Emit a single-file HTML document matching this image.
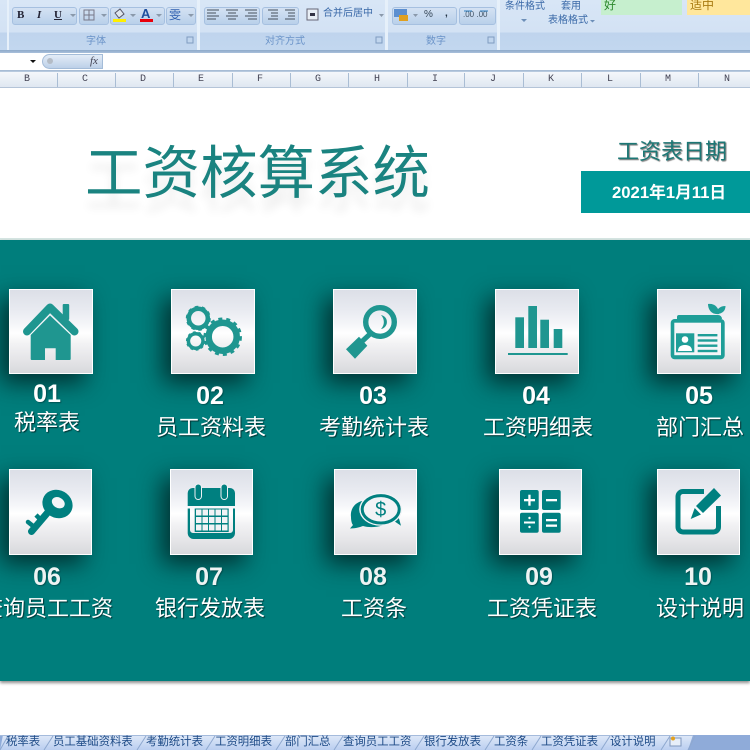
<!DOCTYPE html>
<html lang="zh"><head><meta charset="utf-8"><title>工资核算系统</title>
<style>
html,body{margin:0;padding:0;background:#fff}
#p{position:relative;width:750px;height:750px;overflow:hidden;background:#fff;font-family:"Liberation Sans","Noto Sans CJK SC",sans-serif}
#p div{position:absolute;white-space:nowrap}
.rb{background:linear-gradient(#d4e2f3,#b9d0ea);border:1px solid #a6c0e0;border-radius:3px;height:16px;top:7px;box-sizing:content-box}
.gl{top:35px;height:14px;font-size:10px;line-height:14px;color:#6a93c8}
.rt{font-size:10px;line-height:12px;color:#3a69a8}
.col{top:73px;height:14px;font:10px/14px "Liberation Mono",monospace;color:#445;text-align:center;width:20px}
.sep{top:73px;width:1px;height:14px;background:#a9bdd4}
.tile{box-sizing:border-box;border:1px solid #fff;background:linear-gradient(#dcdfe7 0%,#e9ebf1 25%,#f5f6f9 42%,#fff 52%,#f2f2f4 65%,#e2e2e5 88%,#d8d9dc 100%);box-shadow:-8px 9px 22px rgba(0,30,30,.8)}
.n{width:100px;text-align:center;font-weight:bold;font-size:25px;line-height:28px;color:#fff;text-shadow:1px 1px 1px rgba(0,60,60,.6)}
.l{width:200px;text-align:center;font-size:22px;line-height:28px;color:#fff;text-shadow:1px 1px 1px rgba(0,40,40,.85)}
.t{top:735px;font-size:11.4px;line-height:15px;color:#1d4a86}
</style></head><body><div id="p">

<!-- ribbon -->
<div style="left:0;top:0;width:750px;height:50px;background:linear-gradient(#d8e6f6 0,#d3e2f4 32px,#bfd4ed 33px,#c2d7ef 49px)"></div>
<div style="left:7px;top:0;width:2px;height:50px;background:#e6f0fa"></div>
<div style="left:197px;top:0;width:3px;height:50px;background:#e6f0fa"></div>
<div style="left:385px;top:0;width:3px;height:50px;background:#e6f0fa"></div>
<div style="left:497px;top:0;width:3px;height:50px;background:#e6f0fa"></div>
<div style="left:0;top:50px;width:750px;height:3px;background:linear-gradient(#8ea9c9,#a8c0db)"></div>

<div class="rb" style="left:12px;width:63px"></div>
<div class="rb" style="left:79px;width:28px"></div>
<div class="rb" style="left:110px;width:53px"></div>
<div class="rb" style="left:166px;width:28px"></div>
<div class="rb" style="left:204px;width:54px"></div>
<div class="rb" style="left:262px;width:35px"></div>
<div class="rb" style="left:392px;width:63px"></div>
<div class="rb" style="left:459px;width:35px"></div>

<div style="left:17px;top:8px;font:bold 11px/14px 'Liberation Serif',serif;color:#223">B</div>
<div style="left:37px;top:8px;font:italic bold 11px/14px 'Liberation Serif',serif;color:#223">I</div>
<div style="left:54px;top:8px;font:bold 11px/14px 'Liberation Serif',serif;color:#223;text-decoration:underline">U</div>
<div style="left:141px;top:7px;font:bold 13px/14px 'Liberation Sans',sans-serif;color:#1f4f9e">A</div>
<div style="left:113px;top:19px;width:13px;height:3px;background:#ffef00"></div>
<div style="left:140px;top:19px;width:13px;height:3px;background:#e8000c"></div>
<div style="left:169px;top:7px;font-size:12px;line-height:16px;color:#2f5fb0">雯</div>
<div style="left:424px;top:9px;font-size:10px;line-height:12px;color:#345">%</div>
<div style="left:445px;top:8px;font:bold 10px/12px 'Liberation Sans',sans-serif;color:#234">,</div>
<div class="rt" style="left:463px;top:9px;font-size:8px;color:#456">.00 .00</div>

<svg style="position:absolute;left:0;top:0" width="750" height="50">
<g fill="#8a99ab"><path d="M70 14h6l-3 3zM101 14h6l-3 3zM130 14h6l-3 3zM156 14h6l-3 3zM188 14h6l-3 3zM379 14h5l-2.500 3zM413 14h5l-2.500 3z"/></g>
<g stroke="#778" fill="none"><rect x="84" y="10" width="10" height="10"/><path d="M89 10v10M84 15h10"/></g>
<path d="M115 13l5-4 4 5-5 4z" fill="#dfe6ee" stroke="#556"/>
<g stroke="#46505c" stroke-width="1"><path d="M207 10h12M207 13h9M207 16h12M207 19h9M226 10h12M228 13h8M226 16h12M228 19h8M245 10h12M248 13h9M245 16h12M248 19h9M268 10h10M271 13h7M271 16h7M268 19h10M285 10h10M288 13h7M288 16h7M285 19h10"/></g>
<rect x="307" y="9" width="11" height="11" fill="#e8eef5" stroke="#667"/><rect x="310" y="13" width="5" height="3" fill="#334"/>
<rect x="394" y="9" width="13" height="8" fill="#5c8fd0"/><rect x="399" y="15" width="9" height="6" fill="#e0a020"/>
<path d="M464 11h8M480 11h8" stroke="#2f7fc0"/>
<path d="M521 19h6l-3 3zM590 20h5l-2.500 2.500z" fill="#6d8fb8"/>
<g fill="none" stroke="#7f9cc0"><path d="M187 37h6v6h-6zM376 37h6v6h-6zM488 37h6v6h-6z"/></g>
</svg>

<div class="rt" style="left:323px;top:8px">合并后居中</div>
<div class="rt" style="left:505px;top:1px">条件格式</div>
<div class="rt" style="left:561px;top:1px">套用</div>
<div class="rt" style="left:548px;top:15px">表格格式</div>
<div style="left:601px;top:0;width:81px;height:15px;background:#c6efce;font-size:12px;line-height:11px;color:#2f8a2f;text-indent:3px">好</div>
<div style="left:687px;top:0;width:63px;height:15px;background:#ffe79c;font-size:12px;line-height:11px;color:#a87a10;text-indent:3px">适中</div>
<div class="gl" style="left:86px">字体</div>
<div class="gl" style="left:265px">对齐方式</div>
<div class="gl" style="left:426px">数字</div>

<!-- formula bar -->
<div style="left:0;top:53px;width:750px;height:17px;background:#fff"></div>
<div style="left:42px;top:54px;width:61px;height:15px;border-radius:8px 0 0 8px;background:linear-gradient(#e3ecf7,#bcd0e8);border:1px solid #a4bcd8;box-sizing:border-box"></div>
<div style="left:47px;top:58px;width:6px;height:6px;border-radius:50%;background:#b4bcc6"></div>
<div style="left:90px;top:54px;font:italic 11px/14px 'Liberation Serif',serif;color:#445">fx</div>
<svg style="position:absolute;left:0;top:53px" width="40" height="17"><path d="M30 7h6l-3 3z" fill="#111"/></svg>
<div style="left:0;top:70px;width:750px;height:3px;background:linear-gradient(#9fb6d0,#cfdcec)"></div>

<!-- column header -->
<div style="left:0;top:72px;width:750px;height:15px;background:linear-gradient(#f4f7fb,#dfe7f1)"></div>
<div style="left:0;top:87px;width:750px;height:1px;background:#b4c4d8"></div>
<div class="sep" style="left:57px"></div><div class="sep" style="left:115px"></div><div class="sep" style="left:173px"></div><div class="sep" style="left:232px"></div><div class="sep" style="left:290px"></div><div class="sep" style="left:348px"></div><div class="sep" style="left:407px"></div><div class="sep" style="left:464px"></div><div class="sep" style="left:523px"></div><div class="sep" style="left:581px"></div><div class="sep" style="left:640px"></div><div class="sep" style="left:698px"></div>
<div class="col" style="left:17px">B</div><div class="col" style="left:75px">C</div><div class="col" style="left:133px">D</div><div class="col" style="left:191px">E</div><div class="col" style="left:250px">F</div><div class="col" style="left:308px">G</div><div class="col" style="left:367px">H</div><div class="col" style="left:425px">I</div><div class="col" style="left:483px">J</div><div class="col" style="left:541px">K</div><div class="col" style="left:600px">L</div><div class="col" style="left:658px">M</div><div class="col" style="left:717px">N</div>

<!-- header area -->
<div style="left:85px;top:132px;font-size:57.500px;line-height:84px;color:#1a8380;text-shadow:0 14px 9px rgba(0,0,0,.08)">工资核算系统</div>
<div style="left:617px;top:136px;font-size:22px;line-height:32px;color:#1c7775;text-shadow:1px 1px 1px #777">工资表日期</div>
<div style="left:581px;top:171px;width:169px;height:42px;background:#009999"></div>
<div style="left:612px;top:181px;font-weight:bold;font-size:16.700px;line-height:24px;color:#fff">2021年1月11日</div>

<!-- teal panel -->
<div style="left:0;top:238px;width:750px;height:2px;background:#d5e5e2"></div>
<div style="left:0;top:240px;width:750px;height:441px;background:#007e7c;box-shadow:0 2px 3px rgba(0,0,0,.45)"></div>

<div class="tile" style="left:9px;top:289px;width:84px;height:85px"></div>
<div class="tile" style="left:171px;top:289px;width:84px;height:85px"></div>
<div class="tile" style="left:333px;top:289px;width:84px;height:85px"></div>
<div class="tile" style="left:495px;top:289px;width:84px;height:85px"></div>
<div class="tile" style="left:657px;top:289px;width:84px;height:85px"></div>
<div class="tile" style="left:9px;top:469px;width:83px;height:86px"></div>
<div class="tile" style="left:170px;top:469px;width:83px;height:86px"></div>
<div class="tile" style="left:334px;top:469px;width:83px;height:86px"></div>
<div class="tile" style="left:499px;top:469px;width:83px;height:86px"></div>
<div class="tile" style="left:657px;top:469px;width:83px;height:86px"></div>

<svg style="position:absolute;left:0;top:0" width="750" height="750">
<!-- house -->
<g fill="#1f9690">
<rect x="62.700" y="304" width="6.500" height="16" rx="1"/>
<path d="M27 331.500 50 307.500 74.500 331.500" fill="none" stroke="#1f9690" stroke-width="8" stroke-linecap="round" stroke-linejoin="round"/>
<path d="M50 315.500 70.700 335V359a1 1 0 0 1-1 1H55.700V348.300H45V360H31.700a1 1 0 0 1-1-1V335Z"/>
</g>
<!-- gears -->
<g fill="none" stroke="#1f9690">
<circle cx="198.300" cy="318.300" r="9.500" stroke-width="4.500"/>
<circle cx="198.300" cy="318.300" r="11" stroke-width="3" pathLength="20" stroke-dasharray="1 1"/>
<circle cx="195.700" cy="341" r="7.300" stroke-width="3.500"/>
<circle cx="195.700" cy="341" r="8.500" stroke-width="2.500" pathLength="20" stroke-dasharray="1 1"/>
<circle cx="222.700" cy="336.700" r="14" stroke-width="6.500"/>
<circle cx="222.700" cy="336.700" r="17.500" stroke-width="3.500" pathLength="28" stroke-dasharray="1 1"/>
</g>
<!-- magnifier -->
<g fill="#1f9690">
<circle cx="380" cy="322" r="14.300" fill="none" stroke="#1f9690" stroke-width="5.400"/>
<path d="M381 315A7.100 7.100 0 0 1 381 329A10 10 0 0 0 381 315Z"/>
<path d="M370 334 362.500 341" stroke="#1f9690" stroke-width="5"/>
<path d="M359 336.700 367.300 345.700 355 358.700 346 349.300Z"/>
</g>
<!-- bars -->
<g fill="#1f9690">
<rect x="515.300" y="317.300" width="8.700" height="30.700"/>
<rect x="528.300" y="306" width="8.700" height="42"/>
<rect x="540.300" y="319.700" width="8.700" height="28.300"/>
<rect x="553.700" y="329" width="8.600" height="19"/>
<rect x="508" y="353" width="59.700" height="2"/>
</g>
<!-- id card -->
<g>
<path d="M677 319V317a2 2 0 0 1 2-2H718a4 4 0 0 1 4 4Z" fill="#1f9e98"/>
<rect x="670.700" y="319" width="54" height="40.300" rx="4" fill="#1f9e98"/>
<rect x="674.300" y="322.700" width="46.700" height="32.500" fill="#f4f5f8"/>
<rect x="676" y="333.300" width="18.300" height="19" fill="#1f9e98"/>
<circle cx="685" cy="339.500" r="3.300" fill="#fff"/>
<path d="M678 351c0-5 4-6 7-6s7 1 7 6Z" fill="#fff"/>
<g fill="#1f9e98"><rect x="697.700" y="334" width="19.700" height="2.400"/><rect x="697.700" y="339.300" width="19.700" height="2.400"/><rect x="697.700" y="344.500" width="19.700" height="2.400"/><rect x="697.700" y="349.800" width="19.700" height="2.400"/></g>
<path d="M708 304C714 303 719 307 719 314 712 315 708 310 708 304Z" fill="#1f9e98"/>
<path d="M725.500 306C720 306 716.500 309 716.500 314 722 314 725.500 311 725.500 306Z" fill="#1f9e98"/>
</g>
<!-- key -->
<g fill="#008080">
<ellipse cx="57.500" cy="504" rx="15.500" ry="13.800" transform="rotate(30 57.500 504)"/>
<ellipse cx="58.300" cy="502.700" rx="6.800" ry="5.200" transform="rotate(30 58.300 502.700)" fill="#f4f5f8"/>
<path d="M49 511 31.500 531.500" stroke="#008080" stroke-width="7" stroke-linecap="round"/>
<path d="M42 521 36 515" stroke="#008080" stroke-width="4.500"/>
<path d="M35.500 528 28 522" stroke="#008080" stroke-width="4.500" stroke-linecap="round"/>
</g>
<!-- calendar -->
<g>
<path d="M187.700 506V493a5 5 0 0 1 5-5H230a5 5 0 0 1 5 5V506Z" fill="#008080"/>
<path d="M187.700 508.500H190V530a3 3 0 0 0 3 3H230a3 3 0 0 0 3-3V508.500H235V533a6 6 0 0 1-6 6H193.700a6 6 0 0 1-6-6Z" fill="#008080"/>
<rect x="195" y="484" width="6.500" height="15.500" rx="3.200" fill="#008080" stroke="#eef0f4" stroke-width="1"/>
<rect x="221" y="484" width="6.500" height="15.500" rx="3.200" fill="#008080" stroke="#eef0f4" stroke-width="1"/>
<rect x="194.700" y="508.500" width="34" height="23.500" fill="#008080"/>
<g fill="#f2f3f5">
<rect x="196" y="509.500" width="5.500" height="6"/><rect x="202.500" y="509.500" width="5.500" height="6"/><rect x="209" y="509.500" width="5.500" height="6"/><rect x="215.500" y="509.500" width="5.500" height="6"/><rect x="222" y="509.500" width="5.500" height="6"/>
<rect x="196" y="517" width="5.500" height="6"/><rect x="202.500" y="517" width="5.500" height="6"/><rect x="209" y="517" width="5.500" height="6"/><rect x="215.500" y="517" width="5.500" height="6"/><rect x="222" y="517" width="5.500" height="6"/>
<rect x="196" y="524.500" width="5.500" height="6"/><rect x="202.500" y="524.500" width="5.500" height="6"/><rect x="209" y="524.500" width="5.500" height="6"/><rect x="215.500" y="524.500" width="5.500" height="6"/><rect x="222" y="524.500" width="5.500" height="6"/>
</g>
</g>
<!-- money bubbles -->
<g>
<path d="M362 501C354 503 350 510 351 517 351 521 352 524 353 525L350 528.500C356 528.500 360 527 363 526 370 528 378 527 384 525L370 510Z" fill="#008080"/>
<path d="M394 521 401 525.700 398 515Z" fill="#008080"/>
<ellipse cx="380.700" cy="509.300" rx="21.500" ry="16.500" fill="#f2f3f6"/>
<ellipse cx="380.700" cy="509.300" rx="18.500" ry="13.700" fill="none" stroke="#008080" stroke-width="3"/>
<text x="380.700" y="516" text-anchor="middle" font-family="Liberation Sans" font-size="20" fill="#008080">$</text>
</g>
<!-- calc -->
<g fill="#008080">
<rect x="520" y="490" width="18.700" height="20" rx="2"/><rect x="542" y="490" width="18.700" height="20" rx="2"/>
<rect x="520" y="512.700" width="18.700" height="20" rx="2"/><rect x="542" y="512.700" width="18.700" height="20" rx="2"/>
</g>
<g fill="#fff">
<rect x="524" y="499" width="11" height="2.300"/><rect x="528.300" y="494.700" width="2.300" height="11"/>
<rect x="546" y="499" width="11" height="2.300"/>
<rect x="524" y="521.500" width="11" height="2"/><circle cx="529.500" cy="518" r="1.200"/><circle cx="529.500" cy="527" r="1.200"/>
<rect x="546" y="519" width="11" height="2.300"/><rect x="546" y="524.500" width="11" height="2.300"/>
</g>
<!-- edit -->
<g>
<path d="M704 491.500H683a5 5 0 0 0-5 5V527a5 5 0 0 0 5 5H713.500a5 5 0 0 0 5-5V506" fill="none" stroke="#008080" stroke-width="5"/>
<path d="M714 488 721 495.500 703 513 696 506Z" fill="#008080"/>
<path d="M694.700 508 701 514.500 690.700 519Z" fill="#008080"/>
</g>
<!-- tabs -->
<defs><linearGradient id="tg" x1="0" y1="0" x2="0" y2="1"><stop offset="0" stop-color="#dfe9f8"/><stop offset="1" stop-color="#bacef0"/></linearGradient></defs>
<rect x="0" y="735" width="750" height="15" fill="#8fabd9"/>
<path d="M0 750 3 735H693L688 750Z" fill="url(#tg)"/>
<rect x="0" y="735" width="693" height="1" fill="#a5bbdc"/>
<g stroke="#8ea8cf" fill="none"><path d="M0 750 8 736M44 750 53 736M137 750 146 736M206 750 215 736M276 750 285 736M334 750 343 736M415 750 424 736M485 750 494 736M532 750 541 736M601 750 610 736M661 750 670 736M688 750 695 736"/></g>
<rect x="670" y="738" width="11" height="8" fill="#e6eef9" stroke="#7f97bd"/>
<circle cx="673" cy="738.500" r="2" fill="#e2a020"/>
</svg>

<div class="n" style="left:-3px;top:380px">01</div>
<div class="n" style="left:160px;top:382px">02</div>
<div class="n" style="left:323px;top:382px">03</div>
<div class="n" style="left:486px;top:382px">04</div>
<div class="n" style="left:649px;top:382px">05</div>
<div class="n" style="left:-3px;top:563px;color:#eef3f3">06</div>
<div class="n" style="left:159px;top:563px;color:#eef3f3">07</div>
<div class="n" style="left:323px;top:563px;color:#eef3f3">08</div>
<div class="n" style="left:489px;top:563px;color:#eef3f3">09</div>
<div class="n" style="left:648px;top:563px;color:#eef3f3">10</div>

<div class="l" style="left:-53px;top:409px">税率表</div>
<div class="l" style="left:111px;top:414px">员工资料表</div>
<div class="l" style="left:274px;top:414px">考勤统计表</div>
<div class="l" style="left:438px;top:414px">工资明细表</div>
<div class="l" style="left:600px;top:414px">部门汇总</div>
<div class="l" style="left:-53px;top:595px">查询员工工资</div>
<div class="l" style="left:110px;top:595px">银行发放表</div>
<div class="l" style="left:274px;top:595px">工资条</div>
<div class="l" style="left:442px;top:595px">工资凭证表</div>
<div class="l" style="left:600px;top:595px">设计说明</div>

<div class="t" style="left:6px">税率表</div>
<div class="t" style="left:53px">员工基础资料表</div>
<div class="t" style="left:146px">考勤统计表</div>
<div class="t" style="left:215px">工资明细表</div>
<div class="t" style="left:285px">部门汇总</div>
<div class="t" style="left:343px">查询员工工资</div>
<div class="t" style="left:424px">银行发放表</div>
<div class="t" style="left:494px">工资条</div>
<div class="t" style="left:541px">工资凭证表</div>
<div class="t" style="left:610px">设计说明</div>
</div></body></html>
